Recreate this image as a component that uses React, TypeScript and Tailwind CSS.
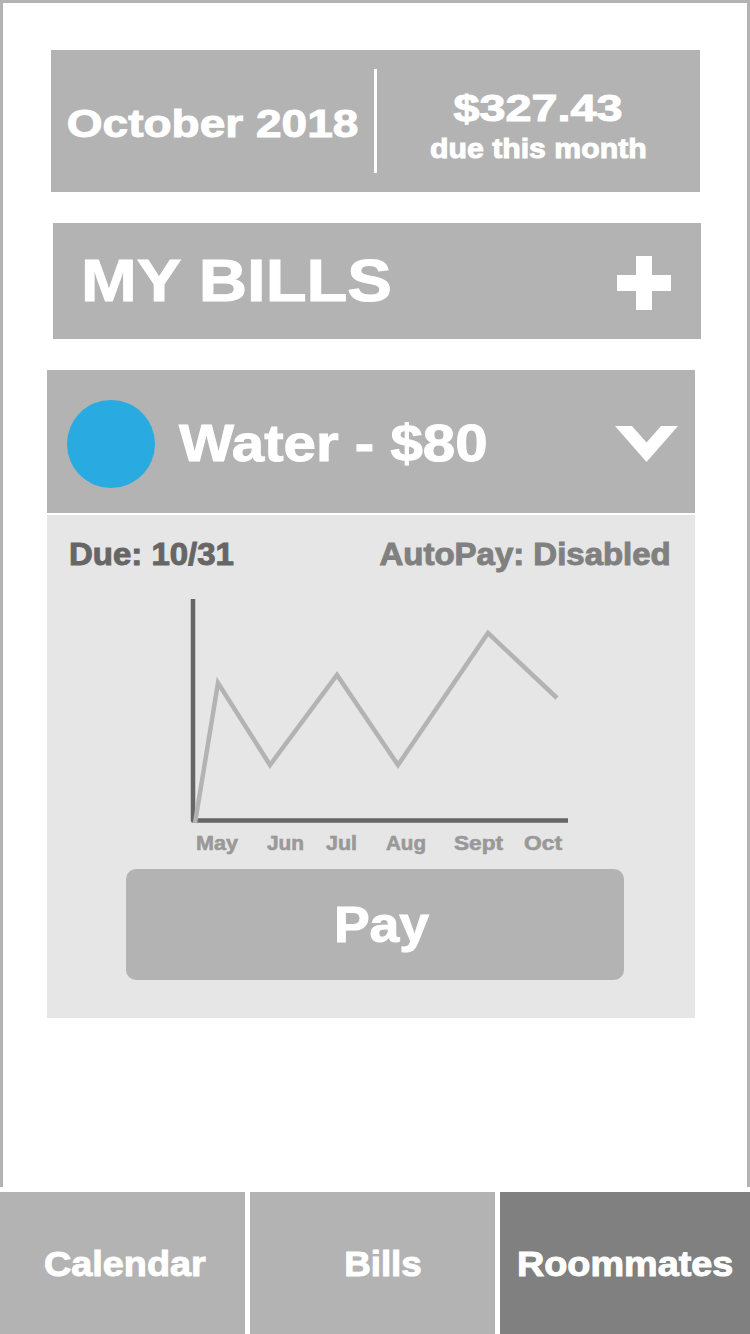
import React from "react";

function Chart() {
  const pts = "148,253 171,113 223,195 290,105 351,195 441,63 510,128";
  const labels: { t: string; x: number; w: number }[] = [
    { t: "May", x: 149, w: 42 },
    { t: "Jun", x: 220, w: 37 },
    { t: "Jul", x: 279, w: 31 },
    { t: "Aug", x: 339, w: 40 },
    { t: "Sept", x: 407, w: 49 },
    { t: "Oct", x: 477, w: 38 },
  ];
  return (
    <svg width="648" height="299" viewBox="0 0 648 299" className="block">
      <path d="M146 29 V250.5 H521" fill="none" stroke="#666666" strokeWidth="4.5" strokeLinejoin="round" />
      <polyline points={pts} fill="none" stroke="#b3b3b3" strokeWidth="4.5" strokeLinejoin="miter" />
      {labels.map((l) => (
        <text
          key={l.t}
          x={l.x}
          y={280}
          fontFamily="'Liberation Sans', Arial, sans-serif"
          fontWeight="700"
          fontSize="20"
          fill="#999999"
          stroke="#999999"
          strokeWidth="0.6"
          textLength={l.w}
          lengthAdjust="spacingAndGlyphs"
        >
          {l.t}
        </text>
      ))}
    </svg>
  );
}

export default function App() {
  return (
    <div className="w-[750px] h-[1334px] bg-white flex flex-col font-['Liberation_Sans',Arial,sans-serif] font-bold overflow-hidden [-webkit-text-stroke:1px_currentColor]">
      <div className="h-[1187px] border-t-[3px] border-x-[3px] border-[#b3b3b3] flex flex-col">
        {/* Summary header */}
        <div className="mt-[47px] ml-[48px] w-[649px] h-[142px] bg-[#b3b3b3] flex items-start text-white">
          <div className="w-[323px] pt-[54px] flex justify-center">
            <span className="block text-[39px] leading-none whitespace-nowrap scale-x-[1.18]">October 2018</span>
          </div>
          <div className="w-[3px] h-[104px] mt-[19px] bg-white" />
          <div className="w-[323px] pt-[41px] flex flex-col items-center">
            <span className="block text-[36px] leading-none whitespace-nowrap scale-x-[1.3]">$327.43</span>
            <span className="block mt-[8px] text-[28px] leading-none whitespace-nowrap scale-x-[1.08]">due this month</span>
          </div>
        </div>

        {/* My bills */}
        <div className="mt-[31px] ml-[50px] w-[648px] h-[116px] bg-[#b3b3b3] flex items-start justify-between pl-[28px] pr-[30px] text-white">
          <span className="block mt-[28px] text-[60px] leading-none whitespace-nowrap origin-left scale-x-[1.115]">MY BILLS</span>
          <svg width="54" height="54" viewBox="0 0 54 54" className="mt-[33px] block">
            <rect x="19" y="0" width="16" height="54" fill="#ffffff" />
            <rect x="0" y="19" width="54" height="16" fill="#ffffff" />
          </svg>
        </div>

        {/* Water bill header */}
        <div className="mt-[31px] ml-[44px] w-[648px] h-[143px] bg-[#b3b3b3] flex items-start pl-[20px] pr-[17px] text-white">
          <div className="mt-[30px] w-[88px] h-[88px] rounded-full bg-[#29abe2] shrink-0" />
          <span className="block ml-[24px] mt-[47px] text-[52px] leading-none whitespace-nowrap origin-left scale-x-[1.12]">Water - $80</span>
          <svg width="63" height="36" viewBox="0 0 63 36" className="ml-auto mt-[56px] block">
            <polygon points="0,0 17,0 31.5,16.5 46,0 63,0 31.5,36" fill="#ffffff" />
          </svg>
        </div>

        {/* Detail panel */}
        <div className="mt-[2px] ml-[44px] w-[648px] bg-[#e6e6e6] flex flex-col pb-[38px]">
          <div className="pt-[23px] pl-[22px] pr-[24px] flex justify-between">
            <span className="block text-[32px] leading-none whitespace-nowrap text-[#666666] origin-left scale-x-[1.03]">Due: 10/31</span>
            <span className="block text-[32px] leading-none whitespace-nowrap text-[#808080] origin-right scale-x-[1.03]">AutoPay: Disabled</span>
          </div>
          <Chart />
          <div className="ml-[79px] w-[498px] h-[111px] rounded-[10px] bg-[#b3b3b3] flex items-center justify-center text-white">
            <span className="block ml-[12px] text-[50px] leading-none whitespace-nowrap scale-x-[1.07]">Pay</span>
          </div>
        </div>
      </div>

      {/* Tab bar */}
      <div className="mt-[5px] h-[142px] flex gap-[5px] text-white">
        <div className="w-[245px] bg-[#b3b3b3] flex items-center justify-center">
          <span className="block ml-[5px] text-[35px] leading-none whitespace-nowrap scale-x-[1.08]">Calendar</span>
        </div>
        <div className="w-[245px] bg-[#b3b3b3] flex items-center justify-center">
          <span className="block ml-[20px] text-[35px] leading-none whitespace-nowrap scale-x-[1.05]">Bills</span>
        </div>
        <div className="w-[250px] bg-[#808080] flex items-center justify-center">
          <span className="block text-[35px] leading-none whitespace-nowrap scale-x-[1.08]">Roommates</span>
        </div>
      </div>
    </div>
  );
}
